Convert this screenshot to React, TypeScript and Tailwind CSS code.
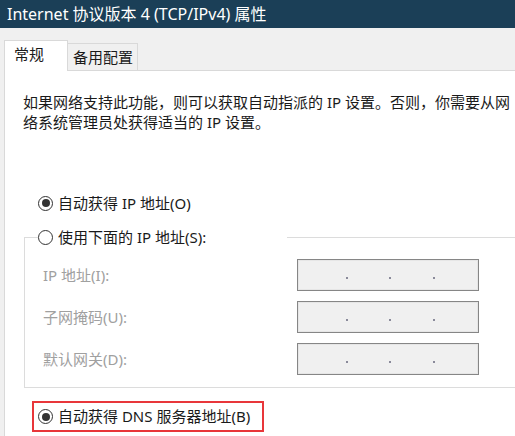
import React from 'react';

const FONT = { fontFamily: '"Noto Sans", "Noto Sans CJK SC", sans-serif' };

function Radio({ checked }: { checked?: boolean }) {
  return (
    <span className="flex h-[15px] w-[15px] shrink-0 items-center justify-center rounded-full border-[1.5px] border-[#333333] bg-white">
      {checked && <span className="h-[8px] w-[8px] rounded-full bg-[#333333]" />}
    </span>
  );
}

function IpBox() {
  return (
    <div className="relative h-[32px] w-[182px] border border-[#868686] bg-[#f0f0f0] shadow-[inset_0_0_0_1px_#e6e6e6]">
      <span className="absolute left-[48px] top-[17px] h-[2px] w-[2px] bg-[#8a8a9a]" />
      <span className="absolute left-[91px] top-[17px] h-[2px] w-[2px] bg-[#8a8a9a]" />
      <span className="absolute left-[135px] top-[17px] h-[2px] w-[2px] bg-[#8a8a9a]" />
    </div>
  );
}

export default function App() {
  const rows = ['IP 地址(I):', '子网掩码(U):', '默认网关(D):'];

  return (
    <div className="h-[436px] w-[515px] overflow-hidden bg-[#f0f0f0] text-[15px] text-[#1a1a1a]" style={FONT}>
      {/* Title bar */}
      <div className="flex h-[28px] items-center bg-[#1b3f57] pl-[7px] text-[16px] text-white">
        Internet 协议版本 4 (TCP/IPv4) 属性
      </div>

      {/* Tabs */}
      <div className="relative z-10 flex h-[42px] items-end pl-[4px]">
        <div className="mb-[-1px] flex h-[31px] w-[64px] items-center border border-b-0 border-[#d9d9d9] bg-white pl-[9px] pb-[4px]">
          常规
        </div>
        <div className="flex h-[27px] w-[70px] items-center border border-l-0 border-b-0 border-[#d9d9d9] bg-[#f0f0f0] pl-[5px]">
          备用配置
        </div>
      </div>

      {/* Panel */}
      <div className="ml-[4px] h-[400px] w-[560px] border-l border-t border-[#d9d9d9] bg-white">
        <p className="pl-[18px] pt-[21px] leading-[20px]">
          如果网络支持此功能，则可以获取自动指派的 IP 设置。否则，你需要从网
          <br />
          络系统管理员处获得适当的 IP 设置。
        </p>

        <label className="ml-[33px] mt-[61px] flex h-[20px] items-center gap-[5px]">
          <Radio checked />
          <span>自动获得 IP 地址(O)</span>
        </label>

        <fieldset className="ml-[19px] mt-[14px] w-[560px] border border-[#dcdcdc] pb-[12px] pt-[12px]">
          <legend className="ml-[13px] flex h-[20px] w-[249px] items-center gap-[5px]">
            <Radio />
            <span>使用下面的 IP 地址(S):</span>
          </legend>
          <div className="flex flex-col gap-[10px]">
            {rows.map((r) => (
              <div key={r} className="flex items-center">
                <span className="w-[272px] pl-[18px] text-[#a0a0a0]">{r}</span>
                <IpBox />
              </div>
            ))}
          </div>
        </fieldset>

        <div className="ml-[27px] mt-[13px] flex h-[31px] w-[232px] items-center gap-[5px] border-2 border-[#e8363a] pl-[4px]">
          <Radio checked />
          <span>自动获得 DNS 服务器地址(B)</span>
        </div>
      </div>
    </div>
  );
}
